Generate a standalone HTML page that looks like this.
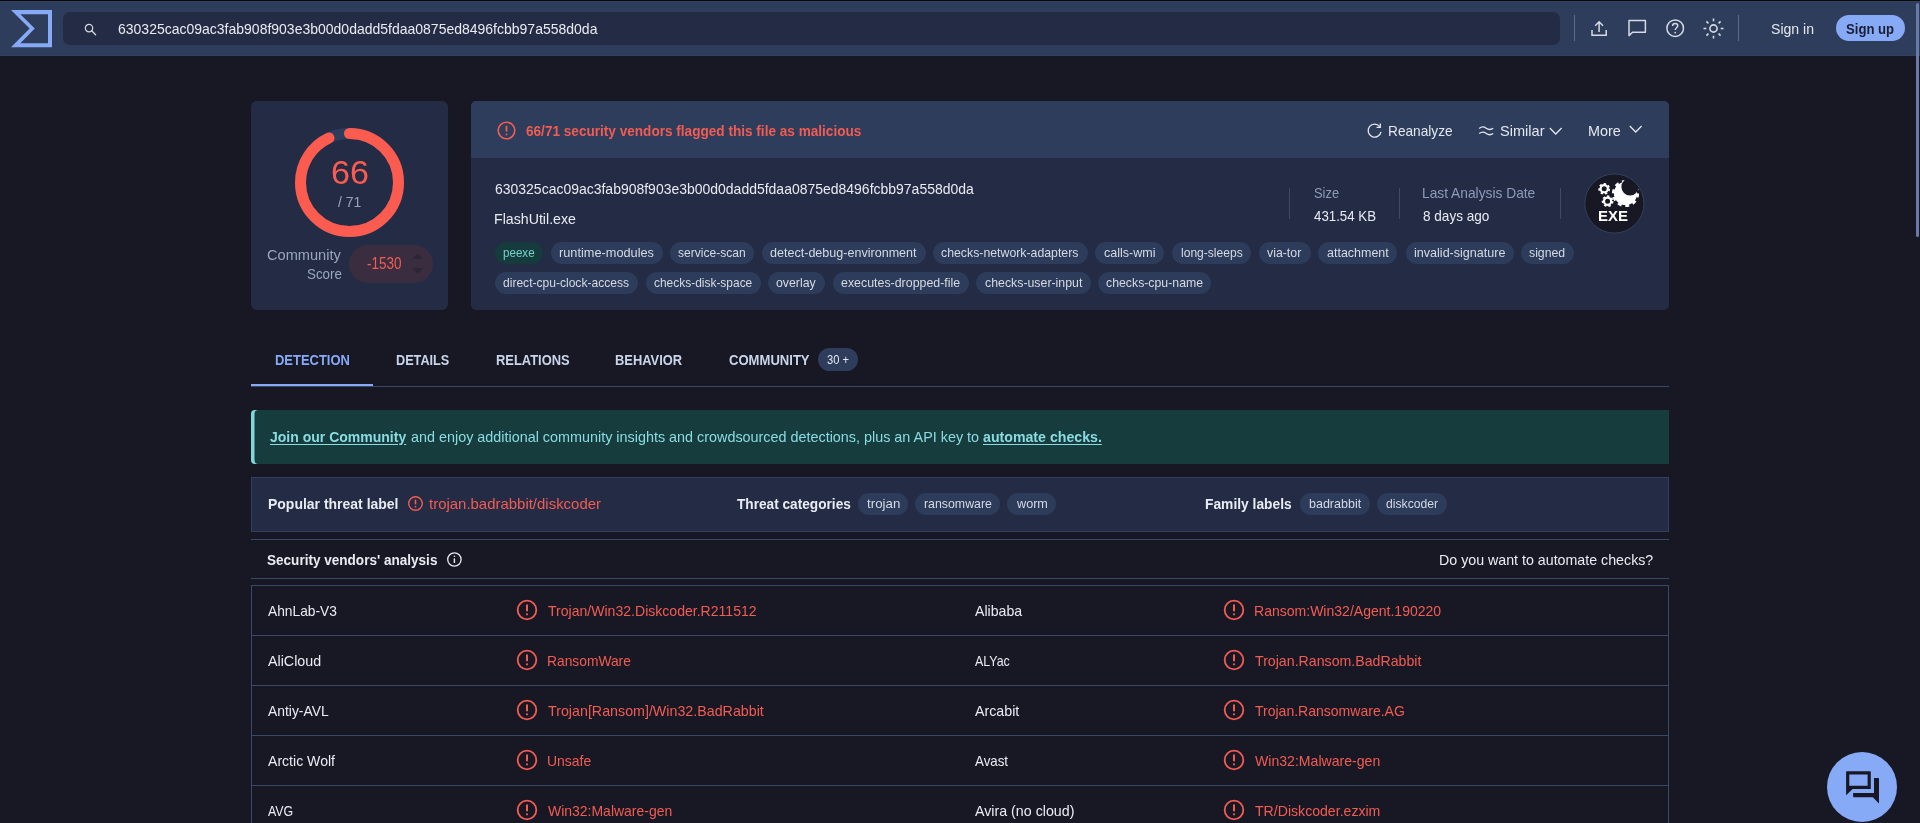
<!DOCTYPE html>
<html><head><meta charset="utf-8"><style>
html,body{margin:0;padding:0;}
body{width:1920px;height:823px;overflow:hidden;position:relative;background:#181825;font-family:"Liberation Sans", sans-serif;}
.t{position:absolute;white-space:nowrap;line-height:1.1172;transform-origin:0 0;}
svg{position:absolute;overflow:visible;}
</style></head><body>
<div style="position:absolute;left:0px;top:0px;width:1920px;height:56px;background:#2d3d5b;"></div>
<div style="position:absolute;left:0px;top:0px;width:1920px;height:1px;background:#0a0a0b;"></div>
<div style="position:absolute;left:0px;top:1px;width:1920px;height:1px;background:#323f60;"></div>
<div style="position:absolute;left:0px;top:55px;width:1920px;height:1px;background:#323f60;"></div>
<svg style="left:0;top:0" width="60" height="56"><path fill="#87aaf6" fill-rule="evenodd" d="M11 10H52V47.3H11L29.6 28.6Z M20.4 14.2L34.8 28.6L20.4 43.2H48V14.2Z"/></svg>
<div style="position:absolute;left:63px;top:12px;width:1497px;height:33px;background:#242b45;border-radius:7px;"></div>
<svg style="left:84px;top:23px" width="14" height="14"><circle cx="5" cy="5.1" r="3.7" fill="none" stroke="#d5dae4" stroke-width="1.2"/><path d="M7.7 7.8L11.6 11.7" stroke="#d5dae4" stroke-width="1.3" stroke-linecap="round"/></svg>
<div style="position:absolute;left:1574px;top:15px;width:1px;height:26px;background:#5a6b92;"></div>
<div style="position:absolute;left:1738px;top:15px;width:1px;height:26px;background:#5a6b92;"></div>
<svg style="left:1591px;top:20px" width="17" height="17"><path d="M1 10V15.2H15.2V10" fill="none" stroke="#d5dae4" stroke-width="1.5"/><path d="M8.1 12V2M4.2 5.8L8.1 1.8L12 5.8" fill="none" stroke="#d5dae4" stroke-width="1.5"/></svg>
<svg style="left:1628px;top:19px" width="19" height="19"><path d="M1 1.5H17.4V13.2H4.5L1 16.6Z" fill="none" stroke="#d5dae4" stroke-width="1.5" stroke-linejoin="round"/></svg>
<svg style="left:1666px;top:19px" width="19" height="19"><circle cx="9.2" cy="9.2" r="8.3" fill="none" stroke="#d5dae4" stroke-width="1.5"/><path d="M6.6 7.0C6.6 5.4 7.8 4.5 9.2 4.5C10.7 4.5 11.8 5.5 11.8 6.8C11.8 8.6 9.2 8.9 9.2 11" fill="none" stroke="#d5dae4" stroke-width="1.4"/><circle cx="9.2" cy="13.6" r="0.9" fill="#d5dae4"/></svg>
<svg style="left:1702px;top:17px" width="23" height="23"><circle cx="11.5" cy="11.5" r="3.6" fill="none" stroke="#d5dae4" stroke-width="1.6"/><path d="M11.5 1.5V4.3" stroke="#d5dae4" stroke-width="1.6" transform="rotate(0 11.5 11.5)"/><path d="M11.5 1.5V4.3" stroke="#d5dae4" stroke-width="1.6" transform="rotate(45 11.5 11.5)"/><path d="M11.5 1.5V4.3" stroke="#d5dae4" stroke-width="1.6" transform="rotate(90 11.5 11.5)"/><path d="M11.5 1.5V4.3" stroke="#d5dae4" stroke-width="1.6" transform="rotate(135 11.5 11.5)"/><path d="M11.5 1.5V4.3" stroke="#d5dae4" stroke-width="1.6" transform="rotate(180 11.5 11.5)"/><path d="M11.5 1.5V4.3" stroke="#d5dae4" stroke-width="1.6" transform="rotate(225 11.5 11.5)"/><path d="M11.5 1.5V4.3" stroke="#d5dae4" stroke-width="1.6" transform="rotate(270 11.5 11.5)"/><path d="M11.5 1.5V4.3" stroke="#d5dae4" stroke-width="1.6" transform="rotate(315 11.5 11.5)"/></svg>
<div style="position:absolute;left:1836px;top:15px;width:69px;height:26px;background:#87aaf6;border-radius:13px;"></div>
<div style="position:absolute;left:1916px;top:3px;width:3px;height:234px;background:#6a7aa6;border-radius:1.5px;"></div>
<div style="position:absolute;left:251px;top:101px;width:197px;height:209px;background:#242b45;border-radius:6px;"></div>
<svg style="left:290px;top:123px" width="120" height="120"><circle cx="59.5" cy="59.5" r="49" fill="none" stroke="#2d3d5b" stroke-width="11"/><circle cx="59.5" cy="59.5" r="49" fill="none" stroke="#fc5b50" stroke-width="11" stroke-linecap="round" stroke-dasharray="286.19 1000" transform="rotate(-90 59.5 59.5)"/></svg>
<div style="position:absolute;left:349px;top:245px;width:84px;height:38px;background:#3a2d3f;border-radius:19px;"></div>
<svg style="left:410px;top:252px" width="16" height="24"><path d="M2.4 6.8L7.6 1.9L12.8 6.8Z" fill="#2a2636"/><path d="M2.4 16.2L7.6 21.7L12.8 16.2Z" fill="#2a2636"/></svg>
<div style="position:absolute;left:471px;top:101px;width:1198px;height:209px;background:#242b45;border-radius:5px;overflow:hidden;"></div>
<div style="position:absolute;left:471px;top:101px;width:1198px;height:57px;background:#2d3d5b;border-radius:5px 5px 0 0;"></div>
<svg style="left:496px;top:120px" width="21" height="21"><circle cx="10.5" cy="10.5" r="8.3" fill="none" stroke="#f25c52" stroke-width="1.6"/><path d="M10.5 5.8V11.6" stroke="#f25c52" stroke-width="1.8"/><circle cx="10.5" cy="14.4" r="1" fill="#f25c52"/></svg>
<svg style="left:1366px;top:122px" width="17" height="17"><path d="M13.7 4.6A6.5 6.5 0 1 0 15.0 9.8" fill="none" stroke="#e3e7ef" stroke-width="1.3"/><path d="M14.3 1.6V5.3H10.6" fill="none" stroke="#e3e7ef" stroke-width="1.3"/></svg>
<svg style="left:1478px;top:124px" width="17" height="14"><path d="M1.2 4.4C3.6 2.4 5.8 2.4 8.2 4.2S12.8 6 15.2 4.2M1.2 9.6C3.6 7.6 5.8 7.6 8.2 9.4S12.8 11.2 15.2 9.4" fill="none" stroke="#e3e7ef" stroke-width="1.3"/></svg>
<svg style="left:1549px;top:127px" width="14" height="9"><path d="M0.8 1L6.7 7L12.6 1" fill="none" stroke="#e3e7ef" stroke-width="1.3"/></svg>
<svg style="left:1629px;top:125px" width="14" height="9"><path d="M0.8 1L6.7 7L12.6 1" fill="none" stroke="#e3e7ef" stroke-width="1.3"/></svg>
<div style="position:absolute;left:1289px;top:188px;width:1px;height:31px;background:#3d4a6a;"></div>
<div style="position:absolute;left:1399px;top:188px;width:1px;height:31px;background:#3d4a6a;"></div>
<div style="position:absolute;left:1560px;top:188px;width:1px;height:31px;background:#3d4a6a;"></div>
<svg style="left:1584px;top:173px" width="62" height="62"><defs><mask id="bgm"><rect x="0" y="0" width="62" height="62" fill="#fff"/><circle cx="46" cy="13.8" r="8.6" fill="#000"/></mask></defs><circle cx="30.4" cy="30.5" r="29.6" fill="#181824" stroke="#34405e" stroke-width="1"/><g fill="none" stroke="#fff"><circle cx="20.2" cy="15.8" r="3.6" stroke-width="2.2"/><circle cx="20.2" cy="15.8" r="5.0" stroke-width="1.8" stroke-dasharray="2.3 2.19"/><circle cx="23.6" cy="28.2" r="3.6" stroke-width="2.2"/><circle cx="23.6" cy="28.2" r="5.0" stroke-width="1.8" stroke-dasharray="2.3 2.19"/></g><g mask="url(#bgm)" fill="#fff"><circle cx="41.5" cy="20.5" r="11.6"/><circle cx="41.5" cy="20.5" r="12.4" fill="none" stroke="#fff" stroke-width="2.4" stroke-dasharray="4 3.79"/></g></svg>
<div style="position:absolute;left:495px;top:242px;width:48px;height:22px;background:#163b3c;border-radius:11px;"></div>
<div style="position:absolute;left:551px;top:242px;width:112px;height:22px;background:#2d3c5a;border-radius:11px;"></div>
<div style="position:absolute;left:670px;top:242px;width:84px;height:22px;background:#2d3c5a;border-radius:11px;"></div>
<div style="position:absolute;left:762px;top:242px;width:163.60000000000002px;height:22px;background:#2d3c5a;border-radius:11px;"></div>
<div style="position:absolute;left:933px;top:242px;width:154.5px;height:22px;background:#2d3c5a;border-radius:11px;"></div>
<div style="position:absolute;left:1095.4px;top:242px;width:68.29999999999995px;height:22px;background:#2d3c5a;border-radius:11px;"></div>
<div style="position:absolute;left:1172.3px;top:242px;width:78.70000000000005px;height:22px;background:#2d3c5a;border-radius:11px;"></div>
<div style="position:absolute;left:1259px;top:242px;width:51.5px;height:22px;background:#2d3c5a;border-radius:11px;"></div>
<div style="position:absolute;left:1318.4px;top:242px;width:78.79999999999995px;height:22px;background:#2d3c5a;border-radius:11px;"></div>
<div style="position:absolute;left:1406px;top:242px;width:107.79999999999995px;height:22px;background:#2d3c5a;border-radius:11px;"></div>
<div style="position:absolute;left:1521px;top:242px;width:52.5px;height:22px;background:#2d3c5a;border-radius:11px;"></div>
<div style="position:absolute;left:495px;top:272px;width:143px;height:22px;background:#2d3c5a;border-radius:11px;"></div>
<div style="position:absolute;left:646px;top:272px;width:114.60000000000002px;height:22px;background:#2d3c5a;border-radius:11px;"></div>
<div style="position:absolute;left:768px;top:272px;width:56.700000000000045px;height:22px;background:#2d3c5a;border-radius:11px;"></div>
<div style="position:absolute;left:833px;top:272px;width:135.5px;height:22px;background:#2d3c5a;border-radius:11px;"></div>
<div style="position:absolute;left:976.2px;top:272px;width:114.39999999999986px;height:22px;background:#2d3c5a;border-radius:11px;"></div>
<div style="position:absolute;left:1098px;top:272px;width:113.40000000000009px;height:22px;background:#2d3c5a;border-radius:11px;"></div>
<div style="position:absolute;left:817.5px;top:348px;width:40px;height:23px;background:#2d3d5b;border-radius:11.5px;"></div>
<div style="position:absolute;left:251px;top:386px;width:1418px;height:1px;background:#3a4869;"></div>
<div style="position:absolute;left:251px;top:383.8px;width:122px;height:2.3px;background:#87aaf6;"></div>
<div style="position:absolute;left:251px;top:410px;width:1418px;height:53.5px;background:#163c3e;border-radius:4px 0 0 4px;box-shadow:inset 3.5px 0 0 #7fd8d6;"></div>
<div style="position:absolute;left:251px;top:477px;width:1418px;height:55px;background:#242b45;box-shadow:inset 0 0 0 1px #343f5e;"></div>
<svg style="left:406px;top:494px" width="19" height="19"><circle cx="9.5" cy="9.5" r="6.8" fill="none" stroke="#f25c52" stroke-width="1.4"/><path d="M9.5 5.6V10.4" stroke="#f25c52" stroke-width="1.6"/><circle cx="9.5" cy="12.7" r="0.85" fill="#f25c52"/></svg>
<div style="position:absolute;left:858px;top:493px;width:50px;height:22px;background:#2d3c5a;border-radius:11px;"></div>
<div style="position:absolute;left:915.4px;top:493px;width:84.60000000000002px;height:22px;background:#2d3c5a;border-radius:11px;"></div>
<div style="position:absolute;left:1007px;top:493px;width:48.799999999999955px;height:22px;background:#2d3c5a;border-radius:11px;"></div>
<div style="position:absolute;left:1300px;top:493px;width:69.59999999999991px;height:22px;background:#2d3c5a;border-radius:11px;"></div>
<div style="position:absolute;left:1377px;top:493px;width:69.70000000000005px;height:22px;background:#2d3c5a;border-radius:11px;"></div>
<div style="position:absolute;left:251px;top:539px;width:1418px;height:1px;background:#3a4869;"></div>
<svg style="left:446px;top:551px" width="17" height="17"><circle cx="8.4" cy="8.5" r="6.7" fill="none" stroke="#e9ecf2" stroke-width="1.3"/><path d="M8.4 7.4V12" stroke="#e9ecf2" stroke-width="1.4"/><circle cx="8.4" cy="5.3" r="0.8" fill="#e9ecf2"/></svg>
<div style="position:absolute;left:251px;top:578px;width:1418px;height:1px;background:#3a4869;"></div>
<div style="position:absolute;left:251px;top:585px;width:1418px;height:300px;background:transparent;box-sizing:border-box;border:1px solid #3a4869;border-bottom:none;"></div>
<div style="position:absolute;left:251px;top:635px;width:1418px;height:1px;background:#3a4869;"></div>
<div style="position:absolute;left:251px;top:685px;width:1418px;height:1px;background:#3a4869;"></div>
<div style="position:absolute;left:251px;top:735px;width:1418px;height:1px;background:#3a4869;"></div>
<div style="position:absolute;left:251px;top:785px;width:1418px;height:1px;background:#3a4869;"></div>
<svg style="left:515px;top:598.2px" width="24" height="24"><circle cx="12" cy="12" r="9.3" fill="none" stroke="#f25c52" stroke-width="1.8"/><path d="M12 6.6V13.2" stroke="#f25c52" stroke-width="2"/><circle cx="12" cy="16.3" r="1.1" fill="#f25c52"/></svg>
<svg style="left:1222px;top:598.2px" width="24" height="24"><circle cx="12" cy="12" r="9.3" fill="none" stroke="#f25c52" stroke-width="1.8"/><path d="M12 6.6V13.2" stroke="#f25c52" stroke-width="2"/><circle cx="12" cy="16.3" r="1.1" fill="#f25c52"/></svg>
<svg style="left:515px;top:648.2px" width="24" height="24"><circle cx="12" cy="12" r="9.3" fill="none" stroke="#f25c52" stroke-width="1.8"/><path d="M12 6.6V13.2" stroke="#f25c52" stroke-width="2"/><circle cx="12" cy="16.3" r="1.1" fill="#f25c52"/></svg>
<svg style="left:1222px;top:648.2px" width="24" height="24"><circle cx="12" cy="12" r="9.3" fill="none" stroke="#f25c52" stroke-width="1.8"/><path d="M12 6.6V13.2" stroke="#f25c52" stroke-width="2"/><circle cx="12" cy="16.3" r="1.1" fill="#f25c52"/></svg>
<svg style="left:515px;top:698.2px" width="24" height="24"><circle cx="12" cy="12" r="9.3" fill="none" stroke="#f25c52" stroke-width="1.8"/><path d="M12 6.6V13.2" stroke="#f25c52" stroke-width="2"/><circle cx="12" cy="16.3" r="1.1" fill="#f25c52"/></svg>
<svg style="left:1222px;top:698.2px" width="24" height="24"><circle cx="12" cy="12" r="9.3" fill="none" stroke="#f25c52" stroke-width="1.8"/><path d="M12 6.6V13.2" stroke="#f25c52" stroke-width="2"/><circle cx="12" cy="16.3" r="1.1" fill="#f25c52"/></svg>
<svg style="left:515px;top:748.2px" width="24" height="24"><circle cx="12" cy="12" r="9.3" fill="none" stroke="#f25c52" stroke-width="1.8"/><path d="M12 6.6V13.2" stroke="#f25c52" stroke-width="2"/><circle cx="12" cy="16.3" r="1.1" fill="#f25c52"/></svg>
<svg style="left:1222px;top:748.2px" width="24" height="24"><circle cx="12" cy="12" r="9.3" fill="none" stroke="#f25c52" stroke-width="1.8"/><path d="M12 6.6V13.2" stroke="#f25c52" stroke-width="2"/><circle cx="12" cy="16.3" r="1.1" fill="#f25c52"/></svg>
<svg style="left:515px;top:798.2px" width="24" height="24"><circle cx="12" cy="12" r="9.3" fill="none" stroke="#f25c52" stroke-width="1.8"/><path d="M12 6.6V13.2" stroke="#f25c52" stroke-width="2"/><circle cx="12" cy="16.3" r="1.1" fill="#f25c52"/></svg>
<svg style="left:1222px;top:798.2px" width="24" height="24"><circle cx="12" cy="12" r="9.3" fill="none" stroke="#f25c52" stroke-width="1.8"/><path d="M12 6.6V13.2" stroke="#f25c52" stroke-width="2"/><circle cx="12" cy="16.3" r="1.1" fill="#f25c52"/></svg>
<svg style="left:1826px;top:751px" width="72" height="72"><circle cx="36" cy="36" r="35" fill="#87aaf6"/><path fill-rule="evenodd" fill="#181825" d="M21 20.3H44Q44.8 20.3 44.8 21.1V37.9H26.6L20.1 44.3V21.1Q20.1 20.3 21 20.3Z M23.3 23.5V34.7H41.6V23.5Z"/><path fill="#181825" d="M48 26.9H52.2Q53 26.9 53 27.7V52.6L46.8 46.3H28Q27.1 46.3 27.1 45.4V41.9H48Z"/></svg>
<div class="t" style="left:118.00px;top:21.42px;font-size:15px;font-weight:400;color:#e9ecf2;transform:scaleX(0.9330);">630325cac09ac3fab908f903e3b00d0dadd5fdaa0875ed8496fcbb97a558d0da</div>
<div class="t" style="left:1770.50px;top:20.47px;font-size:15.5px;font-weight:400;color:#e3e7ef;transform:scaleX(0.9086);">Sign in</div>
<div class="t" style="left:1846.30px;top:20.82px;font-size:15px;font-weight:600;color:#1a1f33;transform:scaleX(0.8736);">Sign up</div>
<div class="t" style="left:330.97px;top:154.83px;font-size:33px;font-weight:400;color:#fc5b50;transform:scaleX(1.0334);">66</div>
<div class="t" style="left:338.00px;top:193.83px;font-size:15px;font-weight:400;color:#98a4bf;transform:scaleX(0.9320);">/ 71</div>
<div class="t" style="left:267.00px;top:247.03px;font-size:15px;font-weight:400;color:#9aa6c0;transform:scaleX(0.9732);">Community</div>
<div class="t" style="left:306.70px;top:265.82px;font-size:15px;font-weight:400;color:#9aa6c0;transform:scaleX(0.8908);">Score</div>
<div class="t" style="left:367.40px;top:254.92px;font-size:16px;font-weight:400;color:#f25c52;transform:scaleX(0.8434);">-1530</div>
<div class="t" style="left:525.60px;top:122.62px;font-size:15px;font-weight:700;color:#f25c52;transform:scaleX(0.9059);">66/71 security vendors flagged this file as malicious</div>
<div class="t" style="left:495.30px;top:180.62px;font-size:15px;font-weight:400;color:#e9ecf2;transform:scaleX(0.9318);">630325cac09ac3fab908f903e3b00d0dadd5fdaa0875ed8496fcbb97a558d0da</div>
<div class="t" style="left:494.35px;top:210.73px;font-size:15px;font-weight:400;color:#e9ecf2;transform:scaleX(0.9455);">FlashUtil.exe</div>
<div class="t" style="left:1387.69px;top:123.23px;font-size:15px;font-weight:400;color:#e3e7ef;transform:scaleX(0.9118);">Reanalyze</div>
<div class="t" style="left:1499.80px;top:123.23px;font-size:15px;font-weight:400;color:#e3e7ef;transform:scaleX(0.9708);">Similar</div>
<div class="t" style="left:1587.74px;top:123.23px;font-size:15px;font-weight:400;color:#e3e7ef;transform:scaleX(0.9594);">More</div>
<div class="t" style="left:1313.60px;top:184.83px;font-size:15px;font-weight:400;color:#8e9bb8;transform:scaleX(0.8600);">Size</div>
<div class="t" style="left:1313.60px;top:208.03px;font-size:15px;font-weight:400;color:#e9ecf2;transform:scaleX(0.8851);">431.54 KB</div>
<div class="t" style="left:1422.28px;top:184.83px;font-size:15px;font-weight:400;color:#8e9bb8;transform:scaleX(0.9179);">Last Analysis Date</div>
<div class="t" style="left:1423.20px;top:208.03px;font-size:15px;font-weight:400;color:#e9ecf2;transform:scaleX(0.9049);">8 days ago</div>
<div class="t" style="left:1598.10px;top:208.12px;font-size:15px;font-weight:700;color:#fff;transform:scaleX(0.9962);">EXE</div>
<div class="t" style="left:503.40px;top:244.88px;font-size:13.5px;font-weight:400;color:#74d2cc;transform:scaleX(0.8601);">peexe</div>
<div class="t" style="left:559.40px;top:244.88px;font-size:13.5px;font-weight:400;color:#d5dae4;transform:scaleX(0.9446);">runtime-modules</div>
<div class="t" style="left:678.40px;top:244.88px;font-size:13.5px;font-weight:400;color:#d5dae4;transform:scaleX(0.8928);">service-scan</div>
<div class="t" style="left:770.40px;top:244.88px;font-size:13.5px;font-weight:400;color:#d5dae4;transform:scaleX(0.9300);">detect-debug-environment</div>
<div class="t" style="left:941.40px;top:244.88px;font-size:13.5px;font-weight:400;color:#d5dae4;transform:scaleX(0.9115);">checks-network-adapters</div>
<div class="t" style="left:1103.80px;top:244.88px;font-size:13.5px;font-weight:400;color:#d5dae4;transform:scaleX(0.9280);">calls-wmi</div>
<div class="t" style="left:1180.70px;top:244.88px;font-size:13.5px;font-weight:400;color:#d5dae4;transform:scaleX(0.8933);">long-sleeps</div>
<div class="t" style="left:1267.40px;top:244.88px;font-size:13.5px;font-weight:400;color:#d5dae4;transform:scaleX(0.9129);">via-tor</div>
<div class="t" style="left:1326.80px;top:244.88px;font-size:13.5px;font-weight:400;color:#d5dae4;transform:scaleX(0.9249);">attachment</div>
<div class="t" style="left:1414.40px;top:244.88px;font-size:13.5px;font-weight:400;color:#d5dae4;transform:scaleX(0.9305);">invalid-signature</div>
<div class="t" style="left:1529.40px;top:244.88px;font-size:13.5px;font-weight:400;color:#d5dae4;transform:scaleX(0.9090);">signed</div>
<div class="t" style="left:503.40px;top:274.88px;font-size:13.5px;font-weight:400;color:#d5dae4;transform:scaleX(0.8932);">direct-cpu-clock-access</div>
<div class="t" style="left:654.40px;top:274.88px;font-size:13.5px;font-weight:400;color:#d5dae4;transform:scaleX(0.8848);">checks-disk-space</div>
<div class="t" style="left:776.40px;top:274.88px;font-size:13.5px;font-weight:400;color:#d5dae4;transform:scaleX(0.9116);">overlay</div>
<div class="t" style="left:841.40px;top:274.88px;font-size:13.5px;font-weight:400;color:#d5dae4;transform:scaleX(0.9179);">executes-dropped-file</div>
<div class="t" style="left:984.60px;top:274.88px;font-size:13.5px;font-weight:400;color:#d5dae4;transform:scaleX(0.9139);">checks-user-input</div>
<div class="t" style="left:1106.40px;top:274.88px;font-size:13.5px;font-weight:400;color:#d5dae4;transform:scaleX(0.9110);">checks-cpu-name</div>
<div class="t" style="left:274.60px;top:352.83px;font-size:14px;font-weight:700;color:#87aaf6;transform:scaleX(0.9260);">DETECTION</div>
<div class="t" style="left:396.40px;top:352.83px;font-size:14px;font-weight:700;color:#c9d5ea;transform:scaleX(0.9058);">DETAILS</div>
<div class="t" style="left:496.00px;top:352.83px;font-size:14px;font-weight:700;color:#c9d5ea;transform:scaleX(0.9219);">RELATIONS</div>
<div class="t" style="left:615.40px;top:352.83px;font-size:14px;font-weight:700;color:#c9d5ea;transform:scaleX(0.9210);">BEHAVIOR</div>
<div class="t" style="left:728.80px;top:352.83px;font-size:14px;font-weight:700;color:#c9d5ea;transform:scaleX(0.9335);">COMMUNITY</div>
<div class="t" style="left:826.50px;top:352.84px;font-size:13px;font-weight:400;color:#e3e9f3;transform:scaleX(0.8575);">30 +</div>
<div class="t" style="left:270.00px;top:428.73px;font-size:15px;font-weight:700;color:#8adce2;transform:scaleX(0.9339);text-decoration:underline;text-underline-offset:2px;">Join our Community</div>
<div class="t" style="left:410.50px;top:428.73px;font-size:15px;font-weight:400;color:#8adce2;transform:scaleX(0.9582);">and enjoy additional community insights and crowdsourced detections, plus an API key to</div>
<div class="t" style="left:983.00px;top:428.73px;font-size:15px;font-weight:700;color:#8adce2;transform:scaleX(0.9442);text-decoration:underline;text-underline-offset:2px;">automate checks.</div>
<div class="t" style="left:267.67px;top:495.73px;font-size:15px;font-weight:700;color:#e9ecf2;transform:scaleX(0.9318);">Popular threat label</div>
<div class="t" style="left:429.00px;top:495.73px;font-size:15px;font-weight:400;color:#f25c52;transform:scaleX(0.9965);">trojan.badrabbit/diskcoder</div>
<div class="t" style="left:736.70px;top:495.73px;font-size:15px;font-weight:700;color:#e9ecf2;transform:scaleX(0.9102);">Threat categories</div>
<div class="t" style="left:1205.33px;top:495.73px;font-size:15px;font-weight:700;color:#e9ecf2;transform:scaleX(0.9201);">Family labels</div>
<div class="t" style="left:866.60px;top:495.88px;font-size:13.5px;font-weight:400;color:#d5dae4;transform:scaleX(0.9861);">trojan</div>
<div class="t" style="left:924.00px;top:495.88px;font-size:13.5px;font-weight:400;color:#d5dae4;transform:scaleX(0.9137);">ransomware</div>
<div class="t" style="left:1016.54px;top:495.88px;font-size:13.5px;font-weight:400;color:#d5dae4;transform:scaleX(0.9362);">worm</div>
<div class="t" style="left:1308.60px;top:495.88px;font-size:13.5px;font-weight:400;color:#d5dae4;transform:scaleX(0.9267);">badrabbit</div>
<div class="t" style="left:1385.60px;top:495.88px;font-size:13.5px;font-weight:400;color:#d5dae4;transform:scaleX(0.9008);">diskcoder</div>
<div class="t" style="left:267.40px;top:552.02px;font-size:15px;font-weight:700;color:#e9ecf2;transform:scaleX(0.9033);">Security vendors' analysis</div>
<div class="t" style="left:1439.05px;top:552.02px;font-size:15px;font-weight:400;color:#e9ecf2;transform:scaleX(0.9483);">Do you want to automate checks?</div>
<div class="t" style="left:267.80px;top:602.72px;font-size:15px;font-weight:400;color:#e9ecf2;transform:scaleX(0.9181);">AhnLab-V3</div>
<div class="t" style="left:548.40px;top:602.72px;font-size:15px;font-weight:400;color:#f25c52;transform:scaleX(0.9371);">Trojan/Win32.Diskcoder.R211512</div>
<div class="t" style="left:975.10px;top:602.72px;font-size:15px;font-weight:400;color:#e9ecf2;transform:scaleX(0.9409);">Alibaba</div>
<div class="t" style="left:1254.16px;top:602.72px;font-size:15px;font-weight:400;color:#f25c52;transform:scaleX(0.9352);">Ransom:Win32/Agent.190220</div>
<div class="t" style="left:267.80px;top:652.72px;font-size:15px;font-weight:400;color:#e9ecf2;transform:scaleX(0.9510);">AliCloud</div>
<div class="t" style="left:547.48px;top:652.72px;font-size:15px;font-weight:400;color:#f25c52;transform:scaleX(0.9199);">RansomWare</div>
<div class="t" style="left:975.10px;top:652.72px;font-size:15px;font-weight:400;color:#e9ecf2;transform:scaleX(0.8289);">ALYac</div>
<div class="t" style="left:1255.10px;top:652.72px;font-size:15px;font-weight:400;color:#f25c52;transform:scaleX(0.9445);">Trojan.Ransom.BadRabbit</div>
<div class="t" style="left:267.80px;top:702.72px;font-size:15px;font-weight:400;color:#e9ecf2;transform:scaleX(0.9243);">Antiy-AVL</div>
<div class="t" style="left:548.40px;top:702.72px;font-size:15px;font-weight:400;color:#f25c52;transform:scaleX(0.9505);">Trojan[Ransom]/Win32.BadRabbit</div>
<div class="t" style="left:975.10px;top:702.72px;font-size:15px;font-weight:400;color:#e9ecf2;transform:scaleX(0.9491);">Arcabit</div>
<div class="t" style="left:1255.10px;top:702.72px;font-size:15px;font-weight:400;color:#f25c52;transform:scaleX(0.9344);">Trojan.Ransomware.AG</div>
<div class="t" style="left:267.80px;top:752.72px;font-size:15px;font-weight:400;color:#e9ecf2;transform:scaleX(0.9387);">Arctic Wolf</div>
<div class="t" style="left:547.47px;top:752.72px;font-size:15px;font-weight:400;color:#f25c52;transform:scaleX(0.9289);">Unsafe</div>
<div class="t" style="left:975.10px;top:752.72px;font-size:15px;font-weight:400;color:#e9ecf2;transform:scaleX(0.8877);">Avast</div>
<div class="t" style="left:1255.10px;top:752.72px;font-size:15px;font-weight:400;color:#f25c52;transform:scaleX(0.9388);">Win32:Malware-gen</div>
<div class="t" style="left:267.80px;top:802.72px;font-size:15px;font-weight:400;color:#e9ecf2;transform:scaleX(0.8262);">AVG</div>
<div class="t" style="left:548.40px;top:802.72px;font-size:15px;font-weight:400;color:#f25c52;transform:scaleX(0.9313);">Win32:Malware-gen</div>
<div class="t" style="left:975.10px;top:802.72px;font-size:15px;font-weight:400;color:#e9ecf2;transform:scaleX(0.9487);">Avira (no cloud)</div>
<div class="t" style="left:1255.10px;top:802.72px;font-size:15px;font-weight:400;color:#f25c52;transform:scaleX(0.9401);">TR/Diskcoder.ezxim</div>
</body></html>
